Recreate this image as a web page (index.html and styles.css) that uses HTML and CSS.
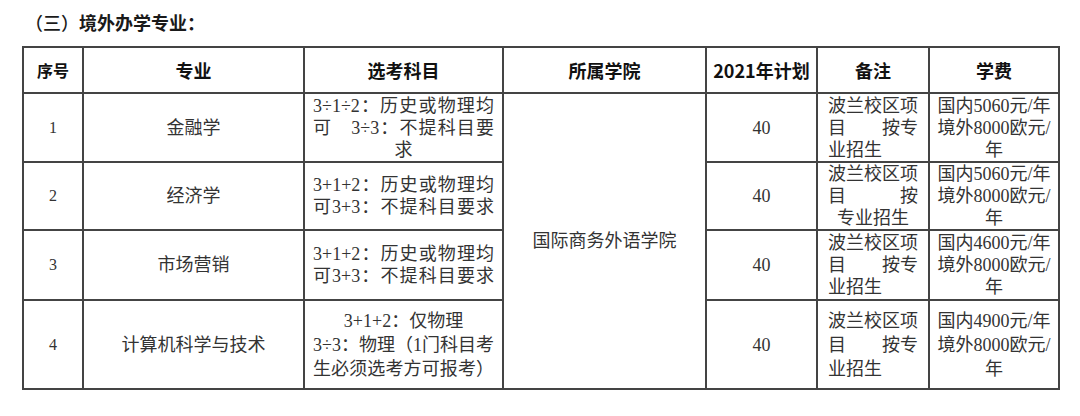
FILE: index.html
```html
<!DOCTYPE html>
<html lang="zh-CN">
<head>
<meta charset="utf-8">
<title>境外办学专业</title>
<link rel="stylesheet" href="styles.css">
</head>
<body>
<div class="page">
  <h2 class="title"><span class="paren">（三）</span>境外办学专业：</h2>
  <table class="grid">
    <colgroup>
      <col class="c-no"><col class="c-major"><col class="c-subj"><col class="c-college"><col class="c-plan"><col class="c-note"><col class="c-fee">
    </colgroup>
    <thead>
      <tr class="r-head">
        <th class="h-no">序号</th>
        <th>专业</th>
        <th>选考科目</th>
        <th>所属学院</th>
        <th class="h-plan">2021年计划</th>
        <th>备注</th>
        <th>学费</th>
      </tr>
    </thead>
    <tbody>
      <tr class="r1">
        <td class="no">1</td>
        <td class="major">金融学</td>
        <td class="subj"><div class="jl">3÷1÷2：历史或物理均</div><div class="jl">可　3÷3：不提科目要</div><div class="cl">求</div></td>
        <td class="college" rowspan="4">国际商务外语学院</td>
        <td class="plan">40</td>
        <td class="note"><div class="jl">波兰校区项</div><div class="split"><span>目</span><span>按专</span></div><div class="ll">业招生</div></td>
        <td class="fee"><div>国内5060元/年</div><div>境外8000欧元/</div><div>年</div></td>
      </tr>
      <tr class="r2">
        <td class="no">2</td>
        <td class="major">经济学</td>
        <td class="subj"><div class="jl">3+1+2：历史或物理均</div><div class="jl">可3+3：不提科目要求</div></td>
        <td class="plan">40</td>
        <td class="note"><div class="jl">波兰校区项</div><div class="split"><span>目</span><span>按</span></div><div class="cl">专业招生</div></td>
        <td class="fee"><div>国内5060元/年</div><div>境外8000欧元/</div><div>年</div></td>
      </tr>
      <tr class="r3">
        <td class="no">3</td>
        <td class="major">市场营销</td>
        <td class="subj"><div class="jl">3+1+2：历史或物理均</div><div class="jl">可3+3：不提科目要求</div></td>
        <td class="plan">40</td>
        <td class="note"><div class="jl">波兰校区项</div><div class="split"><span>目</span><span>按专</span></div><div class="ll">业招生</div></td>
        <td class="fee"><div>国内4600元/年</div><div>境外8000欧元/</div><div>年</div></td>
      </tr>
      <tr class="r4">
        <td class="no">4</td>
        <td class="major">计算机科学与技术</td>
        <td class="subj"><div class="cl">3+1+2：仅物理</div><div class="jl">3÷3：物理（1门科目考</div><div class="jl">生必须选考方可报考）</div></td>
        <td class="plan">40</td>
        <td class="note"><div class="jl">波兰校区项</div><div class="split"><span>目</span><span>按专</span></div><div class="ll">业招生</div></td>
        <td class="fee"><div>国内4900元/年</div><div>境外8000欧元/</div><div>年</div></td>
      </tr>
    </tbody>
  </table>
</div>
</body>
</html>
```
FILE: styles.css
```css
html, body {
  margin: 0;
  padding: 0;
  background: #ffffff;
}

body {
  width: 1080px;
  height: 416px;
  overflow: hidden;
  font-family: "Liberation Serif", "Noto Sans CJK SC", serif;
  color: #333333;
}

.page {
  padding: 10px 0 0 22px;
}

.title {
  margin: 0 0 12px 3px;
  font-family: "Noto Sans CJK SC", sans-serif;
  font-weight: 700;
  font-size: 18px;
  line-height: 24px;
  color: #1a1a1a;
}

.title .paren {
  font-weight: 500;
}

.grid {
  border-collapse: collapse;
  table-layout: fixed;
  width: 1036px;
}

.c-no { width: 60px; }
.c-major { width: 221px; }
.c-subj { width: 199px; }
.c-college { width: 203px; }
.c-plan { width: 111px; }
.c-note { width: 112px; }
.c-fee { width: 130px; }

.grid th,
.grid td {
  border: 2px solid #444444;
  padding: 0;
  text-align: center;
  vertical-align: middle;
}

.grid th {
  font-family: "Noto Sans CJK SC", sans-serif;
  font-weight: 700;
  font-size: 18px;
  line-height: 24px;
  color: #111111;
}

.grid th.h-no {
  font-size: 16px;
}

.grid td {
  font-size: 18px;
  line-height: 22px;
  font-weight: 400;
}

.r4 td {
  line-height: 24px;
}

.r-head { height: 46px; }
.r1 { height: 69px; }
.r2 { height: 68px; }
.r3 { height: 70px; }
.r4 { height: 89px; }

.grid td.no {
  font-size: 16px;
}

.grid td.subj {
  padding: 0 8px;
}

.grid td.note {
  padding: 0 10px;
}

.grid td.fee {
  padding: 0 4px;
}

.jl {
  text-align: justify;
  text-align-last: justify;
}

.cl {
  text-align: center;
}

.ll {
  text-align: left;
}

.split {
  display: flex;
  justify-content: space-between;
}
```
